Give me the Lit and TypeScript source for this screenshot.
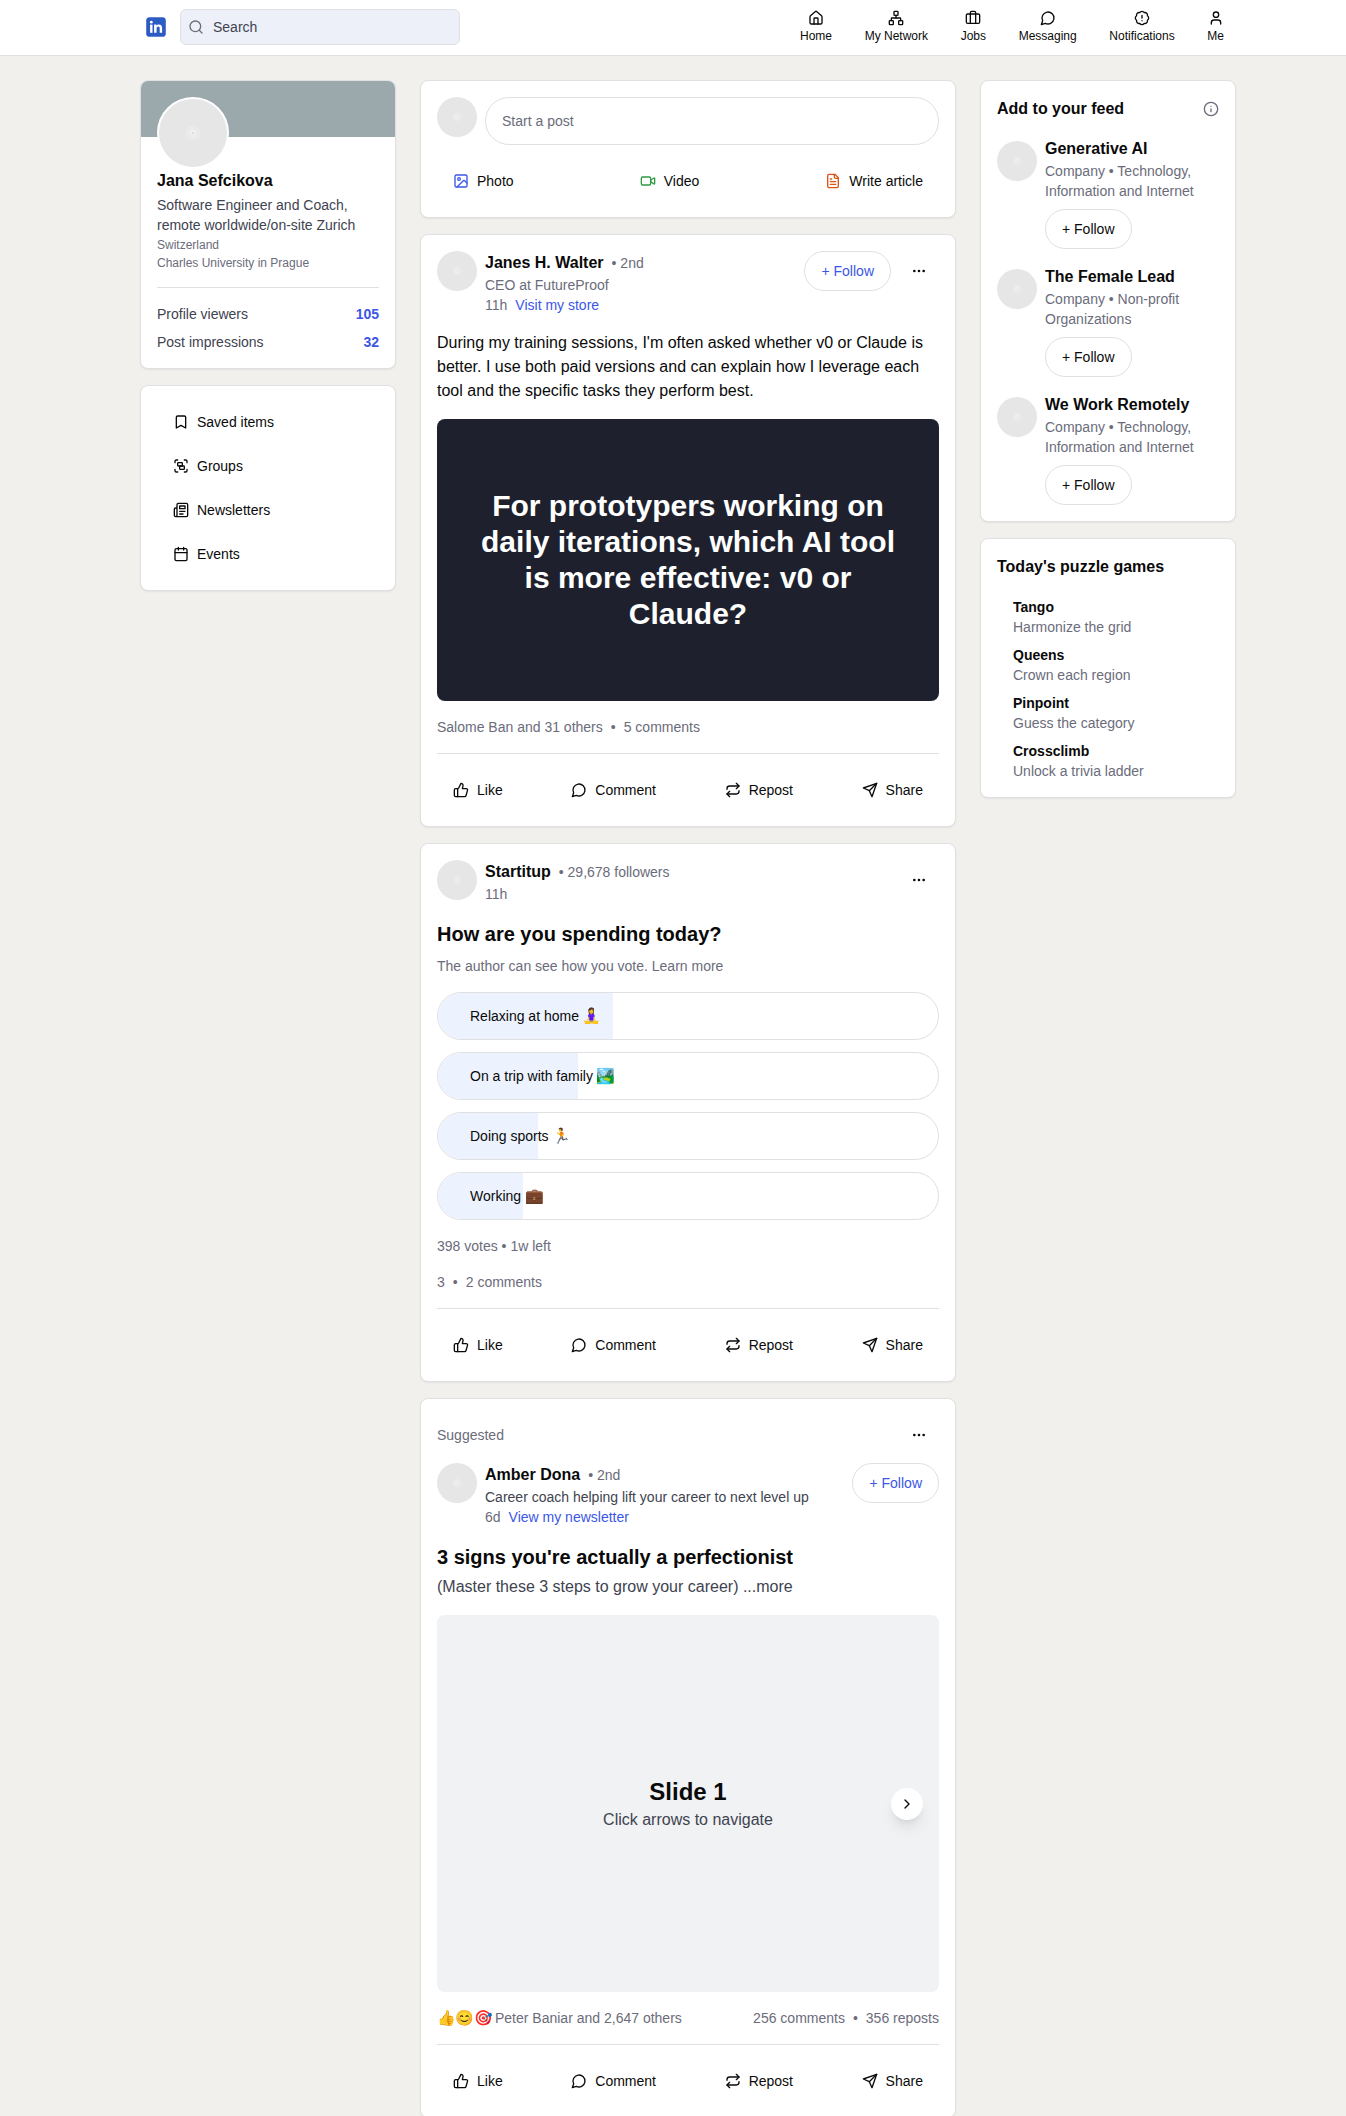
import { LitElement, html, css, svg, nothing, TemplateResult } from "lit";
import { customElement, property } from "lit/decorators.js";

const icons: Record<string, TemplateResult> = {
  search: svg`<circle cx="11" cy="11" r="8"/><path d="m21 21-4.3-4.3"/>`,
  home: svg`<path d="M15 21v-8a1 1 0 0 0-1-1h-4a1 1 0 0 0-1 1v8"/><path d="M3 10a2 2 0 0 1 .709-1.528l7-5.999a2 2 0 0 1 2.582 0l7 5.999A2 2 0 0 1 21 10v9a2 2 0 0 1-2 2H5a2 2 0 0 1-2-2z"/>`,
  network: svg`<rect x="16" y="16" width="6" height="6" rx="1"/><rect x="2" y="16" width="6" height="6" rx="1"/><rect x="9" y="2" width="6" height="6" rx="1"/><path d="M5 16v-3a1 1 0 0 1 1-1h12a1 1 0 0 1 1 1v3"/><path d="M12 12V8"/>`,
  briefcase: svg`<path d="M16 20V4a2 2 0 0 0-2-2h-4a2 2 0 0 0-2 2v16"/><rect x="2" y="6" width="20" height="14" rx="2"/>`,
  message: svg`<path d="M7.9 20A9 9 0 1 0 4 16.1L2 22Z"/>`,
  badge: svg`<path d="M3.85 8.62a4 4 0 0 1 4.78-4.77 4 4 0 0 1 6.74 0 4 4 0 0 1 4.78 4.78 4 4 0 0 1 0 6.74 4 4 0 0 1-4.77 4.78 4 4 0 0 1-6.75 0 4 4 0 0 1-4.78-4.77 4 4 0 0 1 0-6.76Z"/><path d="M12 8v4M12 16h.01"/>`,
  user: svg`<path d="M19 21v-2a4 4 0 0 0-4-4H9a4 4 0 0 0-4 4v2"/><circle cx="12" cy="7" r="4"/>`,
  bookmark: svg`<path d="m19 21-7-4-7 4V5a2 2 0 0 1 2-2h10a2 2 0 0 1 2 2v16z"/>`,
  group: svg`<path d="M3 7V5c0-1.1.9-2 2-2h2M17 3h2c1.1 0 2 .9 2 2v2M21 17v2c0 1.1-.9 2-2 2h-2M7 21H5c-1.1 0-2-.9-2-2v-2"/><rect x="7" y="7" width="7" height="5" rx="1"/><rect x="10" y="12" width="7" height="5" rx="1"/>`,
  newspaper: svg`<path d="M4 22h16a2 2 0 0 0 2-2V4a2 2 0 0 0-2-2H8a2 2 0 0 0-2 2v16a2 2 0 0 1-2 2Zm0 0a2 2 0 0 1-2-2v-9c0-1.1.9-2 2-2h2"/><path d="M18 14h-8M15 18h-5"/><path d="M10 6h8v4h-8V6Z"/>`,
  calendar: svg`<path d="M8 2v4M16 2v4"/><rect x="3" y="4" width="18" height="18" rx="2"/><path d="M3 10h18"/>`,
  image: svg`<rect x="3" y="3" width="18" height="18" rx="2"/><circle cx="9" cy="9" r="2"/><path d="m21 15-3.086-3.086a2 2 0 0 0-2.828 0L6 21"/>`,
  video: svg`<path d="m16 13 5.223 3.482a.5.5 0 0 0 .777-.416V7.870a.5.5 0 0 0-.752-.432L16 10.500"/><rect x="2" y="6" width="14" height="12" rx="2"/>`,
  file: svg`<path d="M15 2H6a2 2 0 0 0-2 2v16a2 2 0 0 0 2 2h12a2 2 0 0 0 2-2V7Z"/><path d="M14 2v4a2 2 0 0 0 2 2h4M10 9H8M16 13H8M16 17H8"/>`,
  like: svg`<path d="M7 10v12"/><path d="M15 5.88 14 10h5.83a2 2 0 0 1 1.92 2.56l-2.33 8A2 2 0 0 1 17.5 22H4a2 2 0 0 1-2-2v-8a2 2 0 0 1 2-2h2.76a2 2 0 0 0 1.79-1.11L12 2a3.13 3.13 0 0 1 3 3.88Z"/>`,
  repeat: svg`<path d="m17 2 4 4-4 4"/><path d="M3 11v-1a4 4 0 0 1 4-4h14"/><path d="m7 22-4-4 4-4"/><path d="M21 13v1a4 4 0 0 1-4 4H3"/>`,
  send: svg`<path d="m22 2-7 20-4-9-9-4Z"/><path d="M22 2 11 13"/>`,
  dots: svg`<circle cx="12" cy="12" r="1"/><circle cx="19" cy="12" r="1"/><circle cx="5" cy="12" r="1"/>`,
  info: svg`<circle cx="12" cy="12" r="10"/><path d="M12 16v-4M12 8h.01"/>`,
  chevron: svg`<path d="m9 18 6-6-6-6"/>`,
};

@customElement("ui-icon")
export class UiIcon extends LitElement {
  @property() name = "";
  static styles = css`
    :host { display: block; flex: none; width: 16px; height: 16px; }
    .svg {
      display: block; width: 16px; height: 16px; fill: none; stroke: currentColor;
      stroke-width: 2; stroke-linecap: round; stroke-linejoin: round;
    }
  `;
  render() {
    return html`<svg class="svg" viewBox="0 0 24 24">${icons[this.name]}</svg>`;
  }
}

@customElement("ui-avatar")
export class UiAvatar extends LitElement {
  static styles = css`
    :host { display: block; flex: none; width: 40px; height: 40px; border-radius: 50%; overflow: hidden; background: #e6e6e6; box-sizing: border-box; }
    .art { display: block; width: 100%; height: 100%; }
  `;
  render() {
    return html`<svg class="art" viewBox="0 0 40 40">
      <circle cx="20" cy="20" r="4.4" fill="#eaeaea"/>
      <circle cx="20" cy="20" r="2.4" fill="#ededed"/>
      <circle cx="20" cy="20" r="1.1" fill="#f6f6f6"/>
      <circle cx="20" cy="20" r=".5" fill="#c4c4c4"/>
    </svg>`;
  }
}

const nav = [
  ["home", "Home"], ["network", "My Network"], ["briefcase", "Jobs"],
  ["message", "Messaging"], ["badge", "Notifications"], ["user", "Me"],
];
const links = [
  ["bookmark", "Saved items"], ["group", "Groups"], ["newspaper", "Newsletters"], ["calendar", "Events"],
];
const poll: [string, string, number][] = [
  ["Relaxing at home", "🧘‍♀️", 35], ["On a trip with family", "🏞️", 28], ["Doing sports", "🏃", 20], ["Working", "💼", 17],
];
const feed = [
  ["Generative AI", "Company • Technology, Information and Internet"],
  ["The Female Lead", "Company • Non-profit Organizations"],
  ["We Work Remotely", "Company • Technology, Information and Internet"],
];
const games = [
  ["Tango", "Harmonize the grid"], ["Queens", "Crown each region"],
  ["Pinpoint", "Guess the category"], ["Crossclimb", "Unlock a trivia ladder"],
];
const actions = [["like", "Like"], ["message", "Comment"], ["repeat", "Repost"], ["send", "Share"]];

@customElement("app-root")
export class AppRoot extends LitElement {
  static styles = css`
    :host {
      display: block; height: 100vh; overflow: hidden; background: #f1f0ec; color: #0a0a0a;
      font: 14px/20px "Liberation Sans", Arial, "Noto Color Emoji", sans-serif;
    }
    * { box-sizing: border-box; }
    .header { display: flex; align-items: flex-start; height: 56px; padding: 9px 106px 0 146px; background: #fff; border-bottom: 1px solid #e0e0e3; }
    .logo { display: block; flex: none; width: 20px; height: 20px; margin: 8px 14px 0 0; }
    .search { display: flex; align-items: center; gap: 9px; width: 280px; height: 36px; padding: 0 7px; border: 1px solid #e0e0e3; border-radius: 6px; background: #edf0f9; color: #404350; }
    .search-icon { color: #6b6c7b; }
    .nav { display: flex; gap: 0.65px; margin: 1px 0 0 auto; }
    .nav-item { display: flex; flex-direction: column; align-items: center; gap: 2px; padding: 0 16px; font-size: 12px; line-height: 16px; }
    .page { display: grid; grid-template-columns: 256px 536px 256px; gap: 24px; align-items: start; padding: 24px 0 24px 140px; }
    .column { display: flex; flex-direction: column; gap: 16px; }
    .card { display: flex; flex-direction: column; gap: 16px; padding: 16px; background: #fff; border: 1px solid #e0e0e3; border-radius: 8px; box-shadow: 0 1px 2px rgba(0,0,0,.06); }
    .profile { padding: 0 0 16px; gap: 0; overflow: hidden; }
    .banner { height: 56px; background: #9ba9ad; }
    .profile-body { display: flex; flex-direction: column; gap: 2px; margin-top: -40px; padding: 0 16px; }
    .big { width: 72px; height: 72px; border: 2px solid #fff; margin-bottom: -2px; }
    .name { font-size: 16px; line-height: 24px; font-weight: 700; }
    .dark { color: #404350; }
    .muted { color: #6b6c7b; }
    .small { font-size: 12px; line-height: 16px; }
    .blue { color: #3b57e6; }
    .green { color: #2f9a44; }
    .orange { color: #dd5417; }
    .photo { color: #3b57e6; }
    .strong { font-weight: 700; }
    .line { height: 1px; background: #e0e0e3; }
    .profile-line { margin: 14px 0; }
    .between { display: flex; justify-content: space-between; align-items: center; }
    .stat { margin-bottom: 6px; }
    .stat-last { margin-bottom: 0; }
    .links { gap: 4px; }
    .action { display: flex; align-items: center; gap: 8px; height: 40px; padding: 0 16px; }
    .compose { display: flex; gap: 8px; }
    .field { flex: 1; display: flex; align-items: center; height: 48px; padding: 0 16px; border: 1px solid #e0e0e3; border-radius: 24px; }
    .row { display: flex; gap: 8px; }
    .inline { display: flex; align-items: center; gap: 8px; }
    .grow { flex: 1; min-width: 0; }
    .follow { display: flex; align-items: center; height: 40px; padding: 0 16px; border: 1px solid #e0e0e3; border-radius: 20px; white-space: nowrap; }
    .more { display: flex; align-items: center; justify-content: center; width: 40px; height: 40px; }
    .text { font-size: 16px; line-height: 24px; }
    .hero { display: flex; align-items: center; justify-content: center; aspect-ratio: 16 / 9; padding: 0 32px; border-radius: 8px; background: #1e212d; color: #fff; font-size: 30px; line-height: 36px; font-weight: 700; text-align: center; }
    .title { font-size: 20px; line-height: 28px; font-weight: 700; }
    .question { display: flex; flex-direction: column; gap: 8px; }
    .poll { display: flex; flex-direction: column; gap: 12px; }
    .option { position: relative; display: flex; align-items: center; height: 48px; padding: 0 32px; border: 1px solid #e0e0e3; border-radius: 24px; overflow: hidden; }
    .fill { position: absolute; left: 0; top: 0; bottom: 0; background: #edf3fe; }
    .label { position: relative; white-space: pre; }
    .glyph { font-size: 15px; line-height: 1; }
    .author { display: flex; flex-direction: column; gap: 8px; }
    .headline { display: flex; flex-direction: column; gap: 4px; }
    .slide { position: relative; display: flex; flex-direction: column; align-items: center; justify-content: center; aspect-ratio: 4 / 3; border-radius: 8px; background: #f1f2f4; }
    .slide-title { font-size: 24px; line-height: 32px; font-weight: 700; }
    .next { position: absolute; right: 16px; top: calc(50% - 16px); display: flex; align-items: center; justify-content: center; width: 32px; height: 32px; border-radius: 50%; background: #fff; box-shadow: 0 10px 15px -3px rgba(0,0,0,.1), 0 4px 6px -4px rgba(0,0,0,.1); }
    .reactions { display: flex; gap: 4px; }
    .emoji { display: flex; width: 54px; font-size: 15px; }
    .suggestion { display: flex; gap: 8px; }
    .suggestion-avatar { margin-top: 4px; }
    .suggestion-body { display: flex; flex-direction: column; align-items: flex-start; }
    .suggestion-follow { margin-top: 8px; }
    .games { display: flex; flex-direction: column; gap: 8px; padding: 2px 16px 0; }
  `;

  private actionBar() {
    return html`<div class="line"></div>
      <div class="between">
        ${actions.map(([icon, label]) => html`<div class="action"><ui-icon name=${icon}></ui-icon><span>${label}</span></div>`)}
      </div>`;
  }

  private author(name: string, tag: string, role: string, roleClass: string, time: string, link: string, follow: boolean, more: boolean) {
    return html`<div class="row">
      <ui-avatar></ui-avatar>
      <div class="grow">
        <div class="inline"><span class="name">${name}</span><span class="muted">• ${tag}</span></div>
        ${role ? html`<div class=${roleClass}>${role}</div>` : nothing}
        <div class="inline"><span class="muted">${time}</span>${link ? html`<span class="blue">${link}</span>` : nothing}</div>
      </div>
      ${follow ? html`<div class="follow blue">+ Follow</div>` : nothing}
      ${more ? html`<div class="more"><ui-icon name="dots"></ui-icon></div>` : nothing}
    </div>`;
  }

  render() {
    return html`
      <header class="header">
        <svg class="logo" viewBox="0 0 20 20">
          <rect x=".2" y=".2" width="19.6" height="19.6" rx="3.4" fill="#2d5bc4"/>
          <g fill="#fff"><circle cx="5.3" cy="5.2" r="1.4"/><rect x="4.1" y="7.6" width="2.4" height="8.2"/>
          <path d="M8.1 7.6h2.3v1.1c.5-.8 1.4-1.3 2.6-1.3 2.200 0 3.100 1.400 3.100 3.700v4.700h-2.400v-4.300c0-1.200-.3-2-1.400-2-1.200 0-1.700.8-1.700 2v4.300H8.100z"/></g>
        </svg>
        <div class="search"><ui-icon class="search-icon" name="search"></ui-icon><span>Search</span></div>
        <nav class="nav">
          ${nav.map(([icon, label]) => html`<div class="nav-item"><ui-icon name=${icon}></ui-icon><span>${label}</span></div>`)}
        </nav>
      </header>
      <main class="page">
        <aside class="column">
          <section class="card profile">
            <div class="banner"></div>
            <div class="profile-body">
              <ui-avatar class="big"></ui-avatar>
              <div class="name">Jana Sefcikova</div>
              <div class="dark">Software Engineer and Coach, remote worldwide/on-site Zurich</div>
              <div class="muted small">Switzerland</div>
              <div class="muted small">Charles University in Prague</div>
              <div class="line profile-line"></div>
              <div class="between stat"><span class="dark">Profile viewers</span><span class="blue strong">105</span></div>
              <div class="between stat-last"><span class="dark">Post impressions</span><span class="blue strong">32</span></div>
            </div>
          </section>
          <section class="card links">
            ${links.map(([icon, label]) => html`<div class="action"><ui-icon name=${icon}></ui-icon><span>${label}</span></div>`)}
          </section>
        </aside>

        <div class="column">
          <section class="card">
            <div class="compose"><ui-avatar></ui-avatar><div class="field muted">Start a post</div></div>
            <div class="between">
              <div class="action"><ui-icon class="photo" name="image"></ui-icon><span>Photo</span></div>
              <div class="action"><ui-icon class="green" name="video"></ui-icon><span>Video</span></div>
              <div class="action"><ui-icon class="orange" name="file"></ui-icon><span>Write article</span></div>
            </div>
          </section>

          <section class="card">
            ${this.author("Janes H. Walter", "2nd", "CEO at FutureProof", "muted", "11h", "Visit my store", true, true)}
            <div class="text">During my training sessions, I'm often asked whether v0 or Claude is better. I use both paid versions and can explain how I leverage each tool and the specific tasks they perform best.</div>
            <div class="hero">For prototypers working on daily iterations, which AI tool is more effective: v0 or Claude?</div>
            <div class="inline muted"><span>Salome Ban and 31 others</span><span>•</span><span>5 comments</span></div>
            ${this.actionBar()}
          </section>

          <section class="card">
            ${this.author("Startitup", "29,678 followers", "", "", "11h", "", false, true)}
            <div class="question">
              <div class="title">How are you spending today?</div>
              <div class="muted">The author can see how you vote. Learn more</div>
            </div>
            <div class="poll">
              ${poll.map(([label, emoji, share]) => html`<div class="option">
                <div class="fill" style="width:${share}%"></div><span class="label">${label} <span class="glyph">${emoji}</span></span>
              </div>`)}
            </div>
            <div class="muted">398 votes • 1w left</div>
            <div class="inline muted"><span>3</span><span>•</span><span>2 comments</span></div>
            ${this.actionBar()}
          </section>

          <section class="card">
            <div class="author">
              <div class="between"><span class="muted">Suggested</span><div class="more"><ui-icon name="dots"></ui-icon></div></div>
              ${this.author("Amber Dona", "2nd", "Career coach helping lift your career to next level up", "dark", "6d", "View my newsletter", true, false)}
            </div>
            <div class="headline">
              <div class="title">3 signs you're actually a perfectionist</div>
              <div class="text dark">(Master these 3 steps to grow your career) ...more</div>
            </div>
            <div class="slide">
              <div class="slide-title">Slide 1</div>
              <div class="text dark">Click arrows to navigate</div>
              <div class="next"><ui-icon name="chevron"></ui-icon></div>
            </div>
            <div class="between muted">
              <div class="reactions"><span class="emoji"><span>👍</span><span>😊</span><span>🎯</span></span><span>Peter Baniar and 2,647 others</span></div>
              <div class="inline"><span>256 comments</span><span>•</span><span>356 reposts</span></div>
            </div>
            ${this.actionBar()}
          </section>
        </div>

        <aside class="column">
          <section class="card">
            <div class="between"><span class="name">Add to your feed</span><ui-icon class="muted" name="info"></ui-icon></div>
            ${feed.map(([name, about]) => html`<div class="suggestion">
              <ui-avatar class="suggestion-avatar"></ui-avatar>
              <div class="suggestion-body">
                <div class="name">${name}</div>
                <div class="muted">${about}</div>
                <div class="follow suggestion-follow">+ Follow</div>
              </div>
            </div>`)}
          </section>
          <section class="card">
            <div class="name">Today's puzzle games</div>
            <div class="games">
              ${games.map(([name, hint]) => html`<div><div class="strong">${name}</div><div class="muted">${hint}</div></div>`)}
            </div>
          </section>
        </aside>
      </main>`;
  }
}
